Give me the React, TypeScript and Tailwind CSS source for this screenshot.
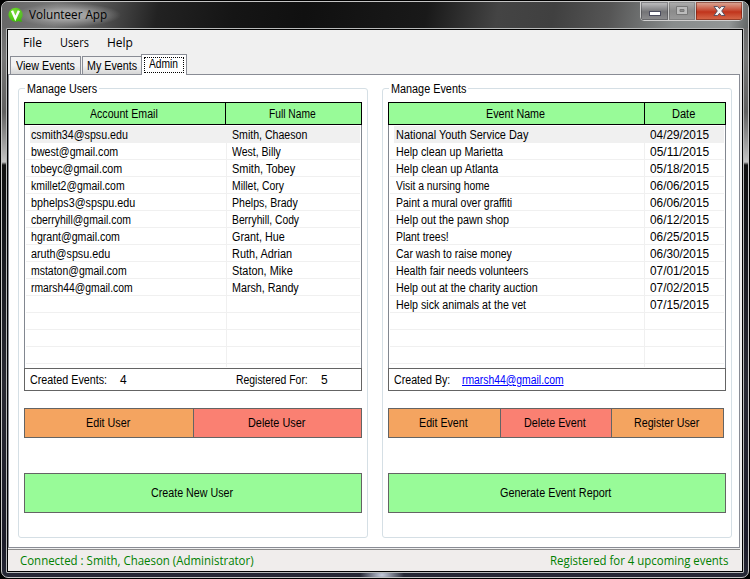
import { useLayoutEffect, useRef, type ReactNode } from 'react';

/** Text condensed or widened horizontally so that it spans `w` pixels. */
function Fit({ w, children, className = '' }: { w: number; children: string; className?: string }) {
  const ref = useRef<HTMLSpanElement>(null);
  useLayoutEffect(() => {
    const el = ref.current;
    if (!el) return;
    const natural = el.offsetWidth;
    el.style.transform = `scaleX(${(w + 1) / natural})`;
    el.style.marginRight = `${w + 1 - natural}px`;
  }, [w, children]);
  return (
    <span ref={ref} className={`inline-block origin-left whitespace-pre ${className}`}>
      {children}
    </span>
  );
}

type Row = [string, number, string, number];

const users: Row[] = [
  ['csmith34@spsu.edu', 96, 'Smith, Chaeson', 74],
  ['bwest@gmail.com', 86, 'West, Billy', 48],
  ['tobeyc@gmail.com', 90, 'Smith, Tobey', 62],
  ['kmillet2@gmail.com', 93, 'Millet, Cory', 51],
  ['bphelps3@spspu.edu', 103, 'Phelps, Brady', 65],
  ['cberryhill@gmail.com', 99, 'Berryhill, Cody', 66],
  ['hgrant@gmail.com', 88, 'Grant, Hue', 52],
  ['aruth@spsu.edu', 78, 'Ruth, Adrian', 59],
  ['mstaton@gmail.com', 95, 'Staton, Mike', 60],
  ['rmarsh44@gmail.com', 101, 'Marsh, Randy', 66],
];

const events: Row[] = [
  ['National Youth Service Day', 131, '04/29/2015', 58],
  ['Help clean up Marietta', 106, '05/11/2015', 58],
  ['Help clean up Atlanta', 101, '05/18/2015', 58],
  ['Visit a nursing home', 93, '06/06/2015', 58],
  ['Paint a mural over graffiti', 115, '06/06/2015', 58],
  ['Help out the pawn shop', 112, '06/12/2015', 58],
  ['Plant trees!', 52, '06/25/2015', 58],
  ['Car wash to raise money', 115, '06/30/2015', 58],
  ['Health fair needs volunteers', 131, '07/01/2015', 58],
  ['Help out at the charity auction', 141, '07/02/2015', 58],
  ['Help sick animals at the vet', 129, '07/15/2015', 58],
];

function Grid({
  rows,
  cols,
  heads,
  firstWidth,
  pad,
}: {
  rows: Row[];
  cols: string;
  heads: [string, number, string, number];
  firstWidth: string;
  pad: string;
}) {
  const lines = Array.from({ length: 14 }, (_, i) => rows[i]);
  return (
    <div className="flex flex-col">
      <div className={`grid h-[23px] border border-black bg-[#98fb98] leading-[22px] ${cols}`}>
        <div className="border-r border-black pr-[2px] text-center">
          <Fit w={heads[1]}>{heads[0]}</Fit>
        </div>
        <div className="pr-[3px] text-center">
          <Fit w={heads[3]}>{heads[2]}</Fit>
        </div>
      </div>
      <div className="flex h-[243px] flex-col border-x border-[#828790] pt-px pr-px pl-px">
        {lines.map((r, i) => (
          <div
            key={i}
            className={`flex h-[17px] shrink-0 border-b border-[#f0f0f0] leading-[18px] ${i === 0 ? 'ml-1 bg-[#f0f0f0]' : ''}`}
          >
            <div className={`${firstWidth} ${pad} shrink-0 border-r border-[#f0f0f0] ${i === 0 ? '-ml-1' : ''}`}>
              {r && <Fit w={r[1]}>{r[0]}</Fit>}
            </div>
            <div className="pl-[5px]">{r && <Fit w={r[3]}>{r[2]}</Fit>}</div>
          </div>
        ))}
        <div className={`h-[3px] border-r border-[#f0f0f0] ${firstWidth}`} />
      </div>
    </div>
  );
}

function Group({ title, w, children }: { title: string; w: number; children: ReactNode }) {
  return (
    <section className="relative h-[450px] w-[350px] rounded-[3px] border border-[#d5dfe5] px-[5px] pt-[13px]">
      <h2 className="absolute -top-[7px] left-[6px] bg-white px-[2px] leading-[15px]">
        <Fit w={w}>{title}</Fit>
      </h2>
      {children}
    </section>
  );
}

function Btn({ w, className, children }: { w: number; className: string; children: string }) {
  return (
    <button className={`flex items-center justify-center border border-[#646464] pr-[2px] ${className}`}>
      <Fit w={w}>{children}</Fit>
    </button>
  );
}

function Logo() {
  return (
    <svg width="16" height="16" viewBox="0 0 16 16">
      <defs>
        <radialGradient id="leaf" cx=".4" cy=".3" r=".8">
          <stop offset="0" stopColor="#7ddc3c" />
          <stop offset="1" stopColor="#35b800" />
        </radialGradient>
      </defs>
      <path d="M7.3.7a7 7 0 1 0 3.2 13.3c1.4.8 2.7.9 4 .6-.7-.6-1.3-1.5-1.4-2.5A7 7 0 0 0 7.3.7Z" fill="url(#leaf)" />
      <path d="M4 3.8 7.3 11.4 10.9 3.8" fill="none" stroke="#fff" strokeWidth="2.4" />
    </svg>
  );
}

function Caption() {
  return (
    <div className="-mt-px flex h-[20px] w-[103px] overflow-hidden rounded-b-[4px] border border-[#d0d0d0] bg-[#2a2a2a]">
      <div className="flex w-[28px] items-center justify-center border-r border-[#c9c9c9] bg-linear-to-b from-[#b5b5b7] from-10% via-[#747477] via-55% to-[#8d8d8f] shadow-[inset_0_0_0_1px_rgba(40,40,45,.35)]">
        <svg width="12" height="6" className="mt-[5px]">
          <rect x=".5" y=".5" width="11" height="4" fill="#fff" stroke="#4a4b5c" />
        </svg>
      </div>
      <div className="flex w-[27px] items-center justify-center border-r border-[#c9c9c9] bg-linear-to-b from-[#b0b0b0] via-[#8b8b8b] via-50% to-[#9a9a9a] shadow-[inset_0_0_0_1px_rgba(60,60,60,.25)]">
        <svg width="12" height="10">
          <path d="M.5.5h11v8H.5Zm3.5 3v2h4v-2Z" fill="#bcbcbc" fillRule="evenodd" stroke="#777" />
        </svg>
      </div>
      <div className="flex flex-1 items-center justify-center bg-linear-to-b from-[#d9a291] from-5% via-[#c1331b] via-55% to-[#d66b4c] shadow-[inset_0_0_0_1px_rgba(90,20,10,.5)]">
        <svg width="13" height="12" viewBox="0 0 13 12">
          <path d="M1 1.5h3.6l1.9 2.2 1.9-2.2H12L8.7 6l3.3 4.5H8.4L6.5 8.3l-1.9 2.2H1L4.3 6Z" fill="#f4f4f4" stroke="#4d4d60" strokeWidth=".9" />
        </svg>
      </div>
    </div>
  );
}

export default function App() {
  return (
    <div className="h-[579px] w-[750px] overflow-hidden bg-black pt-px pl-px font-['Liberation_Sans',Arial,sans-serif] text-[12px] text-black">
      <div className="h-[577px] w-[748px] rounded-[7px] border border-[#c4c4c4] bg-[radial-gradient(ellipse_22px_12px_at_380px_573px,#c8cede,transparent),linear-gradient(to_bottom,#606060_0px,#777_55px,#606060_110px,#c4c4c4_160px,#111_163px,#15171c_230px,#292a33_380px,#1b1c29_540px,#252735)]">
        <header className="flex h-[26px] justify-between rounded-t-[6px] bg-[linear-gradient(100deg,#666_0px,#777_55px,#4a4a4a_110px,#222_155px,#151515_230px,#101010_300px,#191919_420px,#444_490px,#404040_545px,#555_600px,#888c8c_665px,#929696_720px,#616565)]">
          <div className="flex items-center pl-[6px]">
            <Logo />
            <div className="ml-[-9px] bg-[radial-gradient(closest-side,rgba(190,190,190,.7)_35%,rgba(160,160,160,.45)_70%,transparent_100%)] px-[14px] font-['Open_Sans','Noto_Sans',sans-serif] leading-[24px]">
              <Fit w={77}>Volunteer App</Fit>
            </div>
          </div>
          <div className="mr-[5px]">
            <Caption />
          </div>
        </header>
        <div className="ml-[4px] h-[545px] w-[738px] rounded-[1px] border border-[#b8baba]">
          <div className="flex h-[543px] w-[736px] flex-col border border-black bg-[#f0f0f0]">
            <nav className="flex h-[24px] font-['Open_Sans','Noto_Sans',sans-serif] leading-[25px]">
              <span className="w-[37px] pl-[15px]"><Fit w={18}>File</Fit></span>
              <span className="ml-[15px] w-[32px]"><Fit w={28}>Users</Fit></span>
              <span className="ml-[15px]"><Fit w={25}>Help</Fit></span>
            </nav>
            <div className="flex h-[20px] items-end pl-[2px]">
              <div className="h-[18px] w-[71px] border border-b-0 border-[#898c95] bg-linear-to-b from-[#f2f2f2] from-50% to-[#d6d6d6] text-center leading-[18px]">
                <Fit w={58}>View Events</Fit>
              </div>
              <div className="ml-px h-[18px] w-[59px] border border-r-0 border-b-0 border-[#898c95] bg-linear-to-b from-[#f2f2f2] from-50% to-[#d6d6d6] text-center leading-[18px]">
                <Fit w={49}>My Events</Fit>
              </div>
              <div className="z-10 -mb-px h-[21px] w-[46px] border border-b-0 border-[#898c95] bg-white px-[2px] pt-[2px]">
                <div className="h-[16px] border border-dotted border-black pr-px text-center leading-[13px]">
                  <Fit w={28}>Admin</Fit>
                </div>
              </div>
            </div>
            <main className="mr-[2px] flex h-[474px] gap-[14px] border border-[#898c95] bg-white pt-[13px] pl-[9px]">
              <Group title="Manage Users" w={69}>
                <Grid rows={users} cols="grid-cols-[201px_1fr]" heads={['Account Email', 67, 'Full Name', 46]} firstWidth="w-[201px]" pad="pl-[5px]" />
                <div className="flex h-[23px] border border-[#646464] pl-[5px] leading-[22px]">
                  <span className="w-[90px]"><Fit w={76}>Created Events:</Fit></span>
                  <span className="w-[116px]">4</span>
                  <span className="w-[85px]"><Fit w={71}>Registered For:</Fit></span>
                  <span>5</span>
                </div>
                <div className="mt-[17px] flex">
                  <Btn w={43} className="h-[30px] w-[170px] bg-[#f4a460]">Edit User</Btn>
                  <Btn w={56} className="-ml-px h-[30px] w-[169px] bg-[#fa8072]">Delete User</Btn>
                </div>
                <Btn w={81} className="mt-[35px] h-[40px] w-[338px] bg-[#98fb98]">Create New User</Btn>
              </Group>
              <Group title="Manage Events" w={74}>
                <Grid rows={events} cols="grid-cols-[256px_1fr]" heads={['Event Name', 58, 'Date', 22]} firstWidth="w-[255px]" pad="pl-[6px]" />
                <div className="flex h-[23px] border border-[#646464] pl-[5px] leading-[22px]">
                  <span className="w-[68px]"><Fit w={55}>Created By:</Fit></span>
                  <span className="text-[#0000ff]"><Fit w={101} className="underline underline-offset-1">rmarsh44@gmail.com</Fit></span>
                </div>
                <div className="mt-[17px] flex">
                  <Btn w={48} className="h-[30px] w-[113px] bg-[#f4a460]">Edit Event</Btn>
                  <Btn w={61} className="-ml-px h-[30px] w-[112px] bg-[#fa8072]">Delete Event</Btn>
                  <Btn w={64} className="-ml-px h-[30px] w-[113px] bg-[#f4a460]">Register User</Btn>
                </div>
                <Btn w={110} className="mt-[35px] h-[40px] w-[338px] bg-[#98fb98]">Generate Event Report</Btn>
              </Group>
            </main>
            <footer className="mt-px mr-[2px] flex h-[22px] justify-between border-t border-[#8c8c8c] bg-[#f0edec] pr-[12px] pl-[12px] font-['Open_Sans','Noto_Sans',sans-serif] leading-[22px] text-[#008000]">
              <Fit w={233}>Connected : Smith, Chaeson (Administrator)</Fit>
              <Fit w={177}>Registered for 4 upcoming events</Fit>
            </footer>
          </div>
        </div>
      </div>
    </div>
  );
}
